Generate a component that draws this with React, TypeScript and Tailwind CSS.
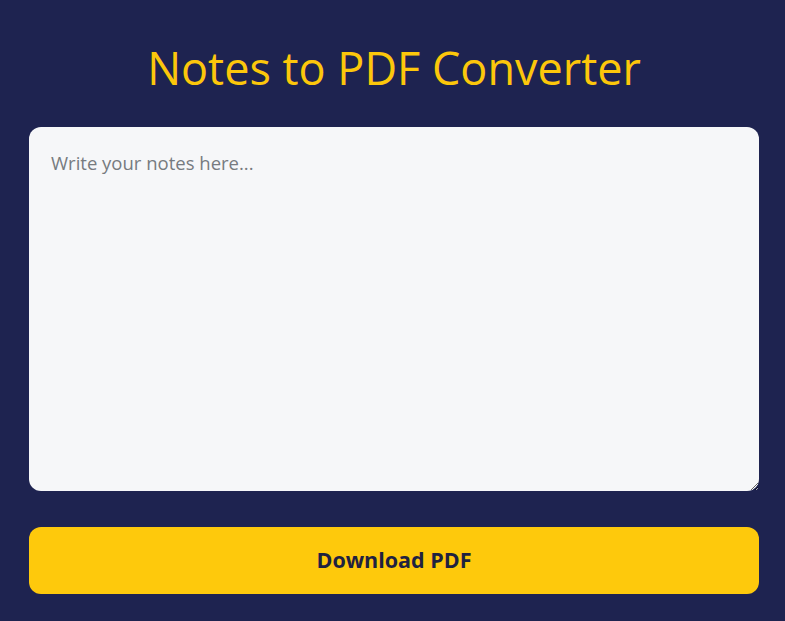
export default function App() {
  return (
    <div
      className="min-h-screen bg-[#1e2350] pl-[29px] pr-[26px] pt-[36px] pb-[27px]"
      style={{ fontFamily: '"Open Sans", "Noto Sans", sans-serif' }}
    >
      <h1 className="text-center text-[45px] font-normal leading-[64px] text-[#fcc70b]">
        Notes to PDF Converter
      </h1>

      <textarea
        placeholder="Write your notes here..."
        className="mt-[27px] block h-[364px] w-full rounded-xl bg-[#f6f7f9] px-[22px] py-[20px] text-[18.5px] leading-[32px] text-[#1f2240] outline-none placeholder:text-[#777b80]"
      />

      <button className="mt-[36px] flex h-[67px] w-full items-center justify-center rounded-xl bg-[#fec90c] text-[21.5px] font-bold text-[#1f2240]">
        Download PDF
      </button>
    </div>
  );
}
